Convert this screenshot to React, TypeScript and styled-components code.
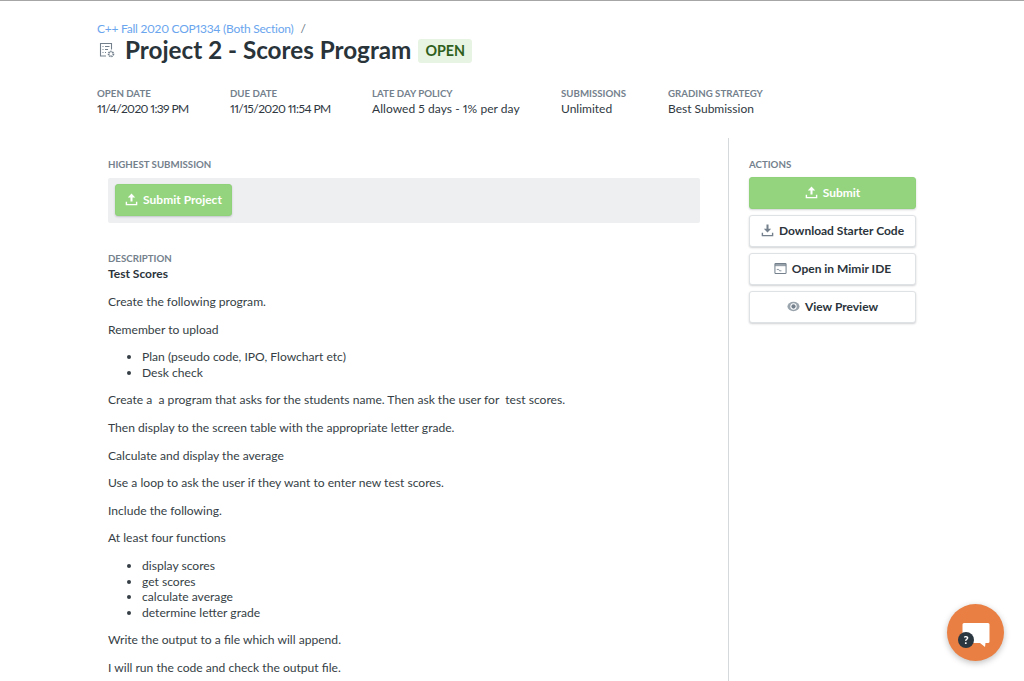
import * as React from 'react'
import styled, { createGlobalStyle } from 'styled-components'

const GlobalStyle = createGlobalStyle`
  html, body {
    margin: 0;
    padding: 0;
    height: 100%;
    overflow: hidden;
    background: #fff;
  }
  body {
    font-family: Lato, "Open Sans", sans-serif;
    font-variant-numeric: proportional-nums;
    color: #2b343b;
  }
`

const Page = styled.div`
  height: 681px;
  overflow: hidden;
  border-top: 1px solid #a6a6a6;
  box-sizing: border-box;
`

const Header = styled.header`
  padding: 20px 0 0 97px;
  height: 137px;
  box-sizing: border-box;
`

const Breadcrumb = styled.div`
  font-size: 12px;
  line-height: 16px;
  color: #6aa5ee;
  display: flex;
  gap: 7px;
  letter-spacing: -0.25px;
  span + span {
    color: #68747f;
  }
`

const TitleRow = styled.div`
  display: flex;
  align-items: center;
  margin-top: -1px;
  height: 28px;
`

const TitleIcon = styled.svg`
  width: 16px;
  height: 16px;
  margin: 0 10px 0 2px;
  flex: none;
`

const Title = styled.h1`
  margin: 0;
  font-size: 24.25px;
  font-weight: 700;
  line-height: 28px;
  color: #29333a;
  white-space: nowrap;
`

const StatusTag = styled.span`
  margin: 1px 0 0 7px;
  padding: 0 7px;
  height: 24px;
  line-height: 24px;
  border-radius: 3px;
  background: #e8f4e3;
  color: #2f5f1c;
  font-size: 14.3px;
  font-weight: 700;
`

const MetaRow = styled.div`
  display: flex;
  margin-top: 22px;
`

const MetaItem = styled.div<{ $width: number }>`
  width: ${props => props.$width}px;
  flex: none;
`

const Label = styled.div`
  font-size: 9.7px;
  line-height: 14px;
  font-weight: 700;
  color: #74818d;
  text-transform: uppercase;
  white-space: nowrap;
`

const MetaValue = styled.div<{ $tracking: number }>`
  margin-top: 1px;
  font-size: 12px;
  line-height: 16px;
  letter-spacing: ${props => props.$tracking}px;
  color: #2f383f;
  white-space: nowrap;
`

const Body = styled.div`
  display: flex;
`

const Main = styled.main`
  width: 592px;
  margin-left: 108px;
  padding-top: 19px;
  flex: none;
`

const SubmissionBar = styled.div`
  margin-top: 7px;
  height: 45px;
  padding: 6px 7px;
  box-sizing: border-box;
  border-radius: 2px;
  background: #eeeff1;
`

const Button = styled.button<{ $primary?: boolean; $wide?: boolean }>`
  display: flex;
  align-items: center;
  justify-content: center;
  gap: 5px;
  box-sizing: border-box;
  width: ${props => (props.$wide ? '167px' : '117px')};
  height: 32px;
  padding: 0 0 2px;
  border-radius: 3px;
  border: 1px solid ${props => (props.$primary ? '#8fd27a' : '#dfe2e5')};
  background: ${props => (props.$primary ? '#94d47e' : '#fff')};
  color: ${props => (props.$primary ? '#fff' : '#2b343b')};
  box-shadow: 0 1px 2px rgba(40, 50, 60, 0.22);
  font-family: inherit;
  font-size: 12px;
  font-weight: 700;
  white-space: nowrap;
`

const Description = styled.section`
  margin-top: 28px;
`

const Heading = styled.div`
  margin-top: 1px;
  font-size: 12px;
  line-height: 16px;
  font-weight: 700;
  color: #2b343b;
`

const Paragraph = styled.p`
  margin: 12px 0 0;
  font-size: 12.1px;
  line-height: 15.6px;
  color: #353e45;
  white-space: pre;
`

const BulletList = styled.ul`
  margin: 12px 0 0;
  padding: 0 0 0 34px;
  font-size: 12.1px;
  line-height: 15.6px;
  color: #353e45;
`

const Divider = styled.div`
  width: 1px;
  height: 544px;
  margin-left: 28px;
  background: #d6d9dc;
  flex: none;
`

const Sidebar = styled.aside`
  width: 167px;
  margin-left: 20px;
  padding-top: 19px;
  flex: none;
  display: flex;
  flex-direction: column;
  gap: 6px;
`

const ChatButton = styled.div`
  position: fixed;
  left: 947px;
  top: 604px;
  width: 57px;
  height: 57px;
  border-radius: 50%;
  background: #e97f42;
  box-shadow: 0 2px 6px rgba(0, 0, 0, 0.25);
`

const ChatBubble = styled.svg`
  position: absolute;
  left: 15px;
  top: 18px;
  width: 28px;
  height: 26px;
`

const HelpBadge = styled.span`
  position: absolute;
  left: 11px;
  top: 28px;
  width: 16px;
  height: 16px;
  border-radius: 50%;
  background: #2b3740;
  color: #fff;
  font-size: 11px;
  line-height: 16px;
  font-weight: 900;
  text-align: center;
`

const IconSvg = styled.svg`
  width: 13px;
  height: 13px;
  flex: none;
`

const TrayArrowIcon: React.FC<{ color: string; down?: boolean }> = ({ color, down }) => (
  <IconSvg viewBox="0 0 14 14">
    <path
      d={down ? 'M5.9 0.5h2.2V5H11L7 9.2 3 5h2.9Z' : 'M7 0.5 11 4.8H8.1V9.2H5.9V4.8H3Z'}
      fill={color}
    />
    <path d="M1.5 9.5v3h11v-3" fill="none" stroke={color} strokeWidth="1.5" />
  </IconSvg>
)

const IdeIcon = () => (
  <IconSvg viewBox="0 0 14 14">
    <rect x="1" y="1.5" width="12" height="11" rx="1" fill="none" stroke="#74818d" strokeWidth="1.1" />
    <rect x="1" y="1.5" width="12" height="3" fill="#74818d" opacity="0.75" />
    <path d="M3 8h2l1 1.5h2" fill="none" stroke="#74818d" strokeWidth="0.9" />
  </IconSvg>
)

const EyeIcon = () => (
  <IconSvg viewBox="0 0 14 14">
    <ellipse cx="7" cy="7" rx="6.5" ry="5" fill="#9aa4ad" />
    <circle cx="7" cy="7" r="3.4" fill="#fff" />
    <circle cx="7" cy="7" r="2.3" fill="#74818d" />
  </IconSvg>
)

const metaItems = [
  { label: 'Open Date', value: '11/4/2020 1:39 PM', width: 133, tracking: -0.62 },
  { label: 'Due Date', value: '11/15/2020 11:54 PM', width: 142, tracking: -0.58 },
  { label: 'Late Day Policy', value: 'Allowed 5 days - 1% per day', width: 189, tracking: 0.05 },
  { label: 'Submissions', value: 'Unlimited', width: 107, tracking: 0 },
  { label: 'Grading Strategy', value: 'Best Submission', width: 140, tracking: 0 },
]

const App: React.FC = () => (
  <Page>
    <GlobalStyle />
    <Header>
      <Breadcrumb>
        <span>C++ Fall 2020 COP1334 (Both Section)</span>
        <span>/</span>
      </Breadcrumb>
      <TitleRow>
        <TitleIcon viewBox="0 0 16 16" fill="none" stroke="#74818d" strokeWidth="1.1">
          <path d="M12.5 7.5V1.5h-11v12.5H7" />
          <path d="M3.5 4.5h1M6 4.5h4.5M3.5 7.5h1M6 7.5h3M3.5 10.5h1M6 10.5h1" />
          <circle cx="12" cy="12" r="2.4" strokeWidth="1.8" strokeDasharray="1.3 0.6" />
        </TitleIcon>
        <Title>Project 2 - Scores Program</Title>
        <StatusTag>OPEN</StatusTag>
      </TitleRow>
      <MetaRow>
        {metaItems.map(item => (
          <MetaItem key={item.label} $width={item.width}>
            <Label>{item.label}</Label>
            <MetaValue $tracking={item.tracking}>{item.value}</MetaValue>
          </MetaItem>
        ))}
      </MetaRow>
    </Header>
    <Body>
      <Main>
        <Label>Highest Submission</Label>
        <SubmissionBar>
          <Button $primary>
            <TrayArrowIcon color="#fff" />
            Submit Project
          </Button>
        </SubmissionBar>
        <Description>
          <Label>Description</Label>
          <Heading>Test Scores</Heading>
          <Paragraph>Create the following program.</Paragraph>
          <Paragraph>Remember to upload</Paragraph>
          <BulletList>
            <li>Plan (pseudo code, IPO, Flowchart etc)</li>
            <li>Desk check</li>
          </BulletList>
          <Paragraph>Create a  a program that asks for the students name. Then ask the user for  test scores.</Paragraph>
          <Paragraph>Then display to the screen table with the appropriate letter grade.</Paragraph>
          <Paragraph>Calculate and display the average</Paragraph>
          <Paragraph>Use a loop to ask the user if they want to enter new test scores.</Paragraph>
          <Paragraph>Include the following.</Paragraph>
          <Paragraph>At least four functions</Paragraph>
          <BulletList>
            <li>display scores</li>
            <li>get scores</li>
            <li>calculate average</li>
            <li>determine letter grade</li>
          </BulletList>
          <Paragraph>Write the output to a file which will append.</Paragraph>
          <Paragraph>I will run the code and check the output file.</Paragraph>
        </Description>
      </Main>
      <Divider />
      <Sidebar>
        <Label>Actions</Label>
        <Button $primary $wide>
          <TrayArrowIcon color="#fff" />
          Submit
        </Button>
        <Button $wide>
          <TrayArrowIcon color="#74818d" down />
          Download Starter Code
        </Button>
        <Button $wide>
          <IdeIcon />
          Open in Mimir IDE
        </Button>
        <Button $wide>
          <EyeIcon />
          View Preview
        </Button>
      </Sidebar>
    </Body>
    <ChatButton>
      <ChatBubble viewBox="0 0 28 26">
        <path d="M2 1h24a1.5 1.5 0 0 1 1.5 1.5v17a1.5 1.5 0 0 1-1.5 1.5h-2.5l-.5 4-5-4H2a1.5 1.5 0 0 1-1.5-1.5v-17A1.5 1.5 0 0 1 2 1Z" fill="#fff" />
      </ChatBubble>
      <HelpBadge>?</HelpBadge>
    </ChatButton>
  </Page>
)

export default App
